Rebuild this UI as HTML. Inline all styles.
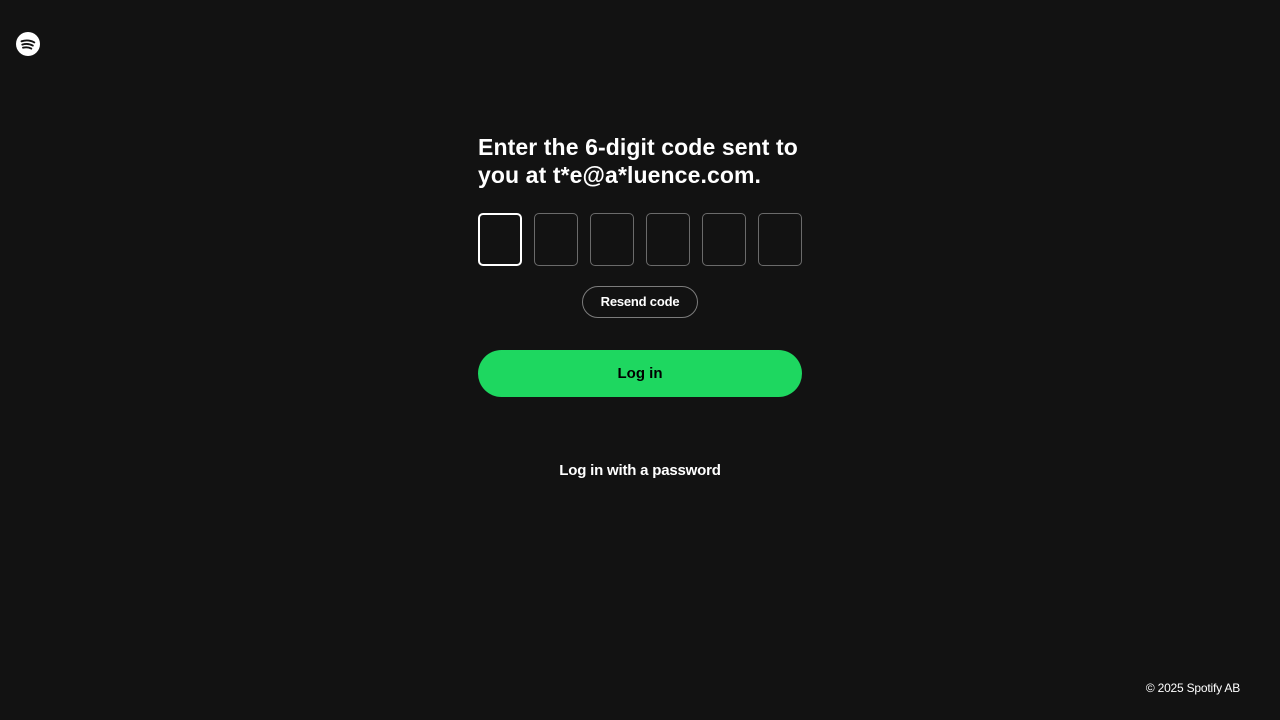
<!DOCTYPE html>
<html><head><style>
body{margin:0;width:1280px;height:720px;background:#121212;font-family:"Liberation Sans",sans-serif;color:#fff;position:relative;overflow:hidden}
.logo{position:absolute;left:16px;top:32px}
h1{position:absolute;left:478px;top:133px;margin:0;font-size:23px;line-height:28px;font-weight:bold;letter-spacing:0.1px;width:360px}
.box{position:absolute;top:213px;width:42px;height:51px;border:1px solid #6a6a6a;border-radius:5px;box-sizing:content-box}
.box.a{border:2px solid #fff;width:40px;height:49px}
.resend{position:absolute;left:582px;top:286px;width:114px;height:30px;border:1px solid #7c7c7c;border-radius:16px;font-size:13px;font-weight:bold;text-align:center;line-height:30px;letter-spacing:-0.2px}
.login{position:absolute;left:478px;top:350px;width:324px;height:47px;background:#1ed760;border-radius:24px;color:#000;font-weight:bold;font-size:15px;text-align:center;line-height:47px}
.pw{position:absolute;left:0;width:1280px;top:462px;text-align:center;font-weight:bold;font-size:15px;letter-spacing:-0.2px}
.foot{position:absolute;right:40px;top:681px;font-size:12px;letter-spacing:-0.2px}
</style></head><body>
<svg class="logo" width="24" height="24" viewBox="0 0 24 24"><circle cx="12" cy="12" r="12" fill="#fff"/><path d="M5.5 9.3c4-1.3 9-1 12.8 1.1M6.3 12.6c3.4-1 7.5-.7 10.5 1M7 15.7c2.8-.7 5.8-.5 8.3.9" stroke="#121212" stroke-width="1.9" stroke-linecap="round" fill="none"/></svg>
<h1>Enter the 6-digit code sent to<br>you at t*e@a*luence.com.</h1>
<div class="box a" style="left:478px"></div>
<div class="box" style="left:534px"></div>
<div class="box" style="left:590px"></div>
<div class="box" style="left:646px"></div>
<div class="box" style="left:702px"></div>
<div class="box" style="left:758px"></div>
<div class="resend">Resend code</div>
<div class="login">Log in</div>
<div class="pw">Log in with a password</div>
<div class="foot">© 2025 Spotify AB</div>
</body></html>
